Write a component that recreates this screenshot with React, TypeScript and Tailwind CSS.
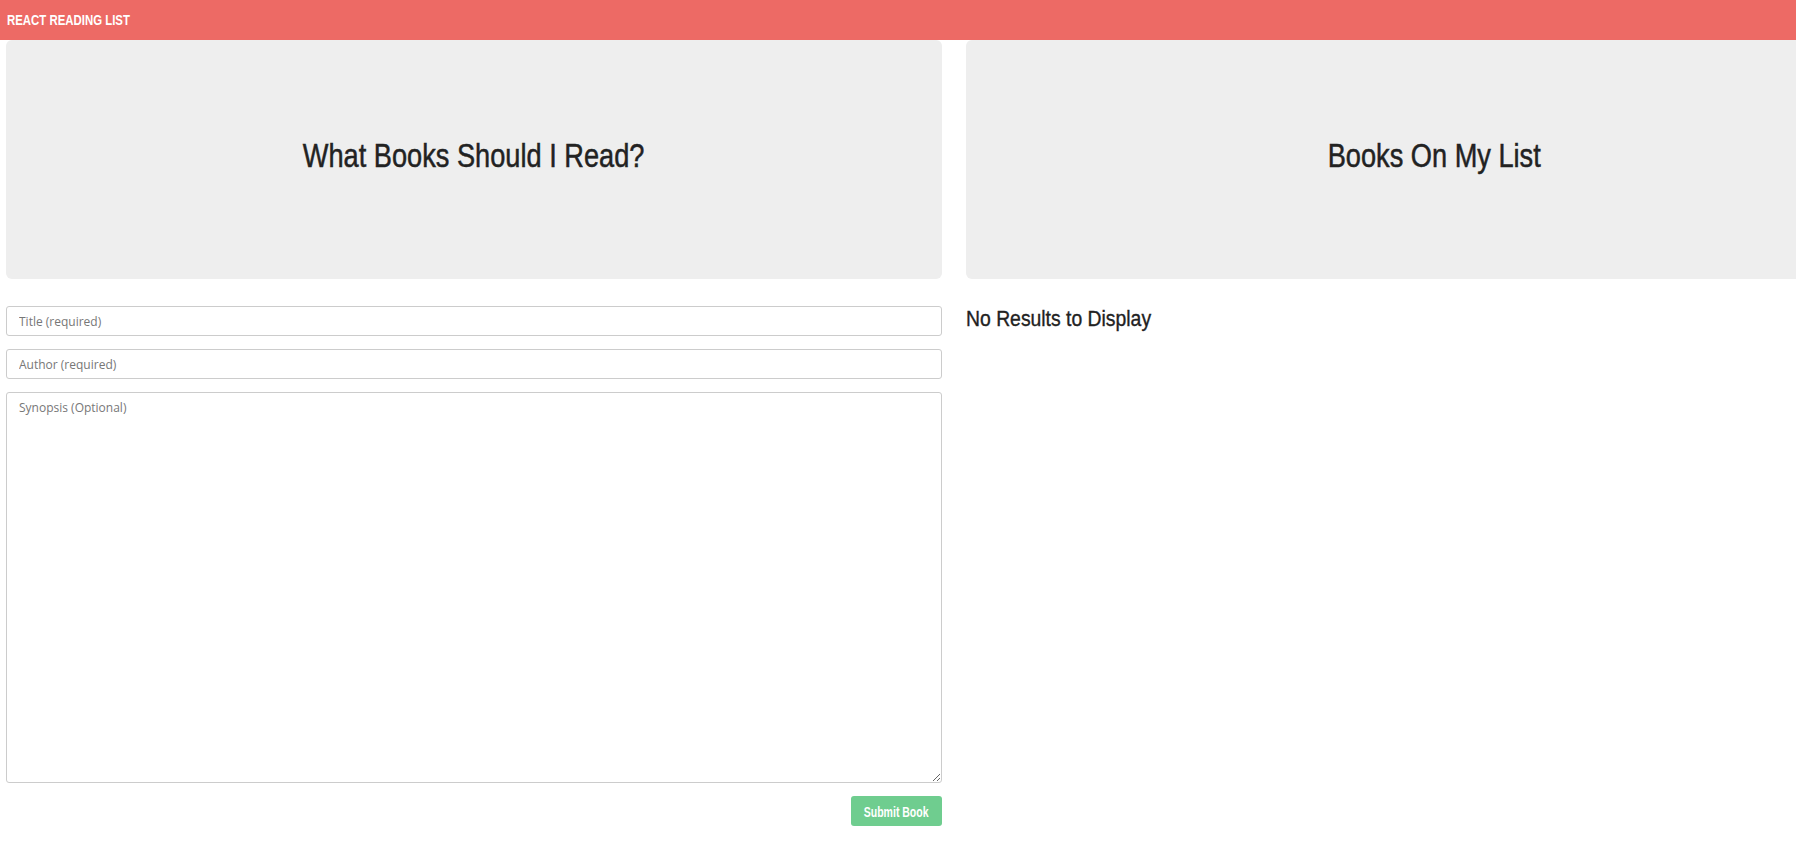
import { useState } from "react";

// narrow headline face: Arial-metric font squeezed to ~80% width
const narrow = "font-['Liberation_Sans',Arial,sans-serif]";

export default function App() {
  const [title, setTitle] = useState("");
  const [author, setAuthor] = useState("");
  const [synopsis, setSynopsis] = useState("");

  return (
    <div className="min-h-screen w-full overflow-hidden bg-white text-[#222]">
      {/* navbar */}
      <nav className="flex h-10 items-center bg-[#ed6a65] px-[7px]">
        <span className={`${narrow} inline-block origin-left scale-x-[0.76] text-[15px] font-bold text-white`}>
          REACT READING LIST
        </span>
      </nav>

      <div className="flex gap-6 pl-[6px]">
        {/* left column */}
        <div className="flex w-[936px] shrink-0 flex-col">
          <div className="flex h-[239px] items-center justify-center rounded-md bg-[#eeeeee] pb-2">
            <h1 className={`${narrow} inline-block scale-x-[0.8] text-[34px] text-[#222] [-webkit-text-stroke:0.5px_#222]`}>
              What Books Should I Read?
            </h1>
          </div>

          <form className="mt-[27px] flex flex-col gap-[13px] font-['Open_Sans',sans-serif]">
            <input
              value={title}
              onChange={(e) => setTitle(e.target.value)}
              placeholder="Title (required)"
              className="h-[30px] rounded-[3px] border border-[#ccc] px-3 text-[12px] outline-none placeholder:text-[#777]"
            />
            <input
              value={author}
              onChange={(e) => setAuthor(e.target.value)}
              placeholder="Author (required)"
              className="h-[30px] rounded-[3px] border border-[#ccc] px-3 text-[12px] outline-none placeholder:text-[#777]"
            />
            <textarea
              value={synopsis}
              onChange={(e) => setSynopsis(e.target.value)}
              placeholder="Synopsis (Optional)"
              className="h-[391px] rounded-[3px] border border-[#ccc] px-3 py-[6px] text-[12px] outline-none placeholder:text-[#777]"
            />
            <div className="flex justify-end">
              <button
                type="button"
                className="h-[30px] w-[91px] rounded-[3px] bg-[#6fcd8f] text-white"
              >
                <span className={`${narrow} inline-block scale-x-[0.75] text-[14px] font-bold`}>Submit Book</span>
              </button>
            </div>
          </form>
        </div>

        {/* right column */}
        <div className="flex w-[936px] shrink-0 flex-col">
          <div className="flex h-[239px] items-center justify-center rounded-md bg-[#eeeeee] pb-2">
            <h1 className={`${narrow} inline-block scale-x-[0.8] text-[34px] text-[#222] [-webkit-text-stroke:0.5px_#222]`}>
              Books On My List
            </h1>
          </div>
          <h3 className={`${narrow} mt-[23px] inline-block origin-left scale-x-[0.88] text-[22px] text-[#222] [-webkit-text-stroke:0.35px_#222]`}>
            No Results to Display
          </h3>
        </div>
      </div>
    </div>
  );
}
